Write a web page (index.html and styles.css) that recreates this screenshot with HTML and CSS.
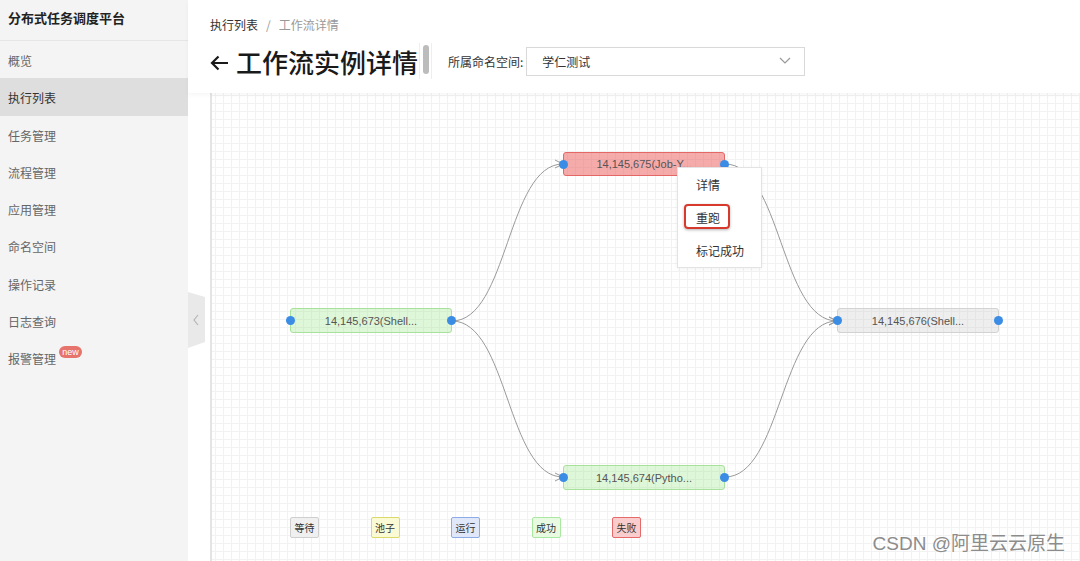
FILE: index.html
```html
<!DOCTYPE html>
<html lang="zh">
<head>
    <meta charset="UTF-8">
    <title>工作流实例详情</title>
    <link rel="stylesheet" href="styles.css">
</head>
<body>

    <!-- Menú lateral -->
    <aside class="sidebar">
        <div class="brand">分布式任务调度平台</div>
        <nav class="nav">
            <a class="nav-item">概览</a>
            <a class="nav-item active">执行列表</a>
            <a class="nav-item">任务管理</a>
            <a class="nav-item">流程管理</a>
            <a class="nav-item">应用管理</a>
            <a class="nav-item">命名空间</a>
            <a class="nav-item">操作记录</a>
            <a class="nav-item">日志查询</a>
            <a class="nav-item">报警管理<span class="badge">new</span></a>
        </nav>
    </aside>

    <!-- Pestaña para plegar el menú -->
    <div class="collapse-tab">
        <svg width="17" height="56" viewBox="0 0 17 56">
            <path d="M0 0 L17 5 L17 50 L0 56 Z" fill="#e9e9e9"/>
            <path d="M10 23 L6 28 L10 33" fill="none" stroke="#b5b5b5" stroke-width="1.2"/>
        </svg>
    </div>

    <main class="main">
        <!-- Cabecera -->
        <header class="page-header">
            <div class="breadcrumb">
                <span class="crumb">执行列表</span>
                <span class="sep">/</span>
                <span class="crumb current">工作流详情</span>
            </div>
            <div class="title-row">
                <h1 class="page-title">
                    <svg class="back" width="19" height="16" viewBox="0 0 19 16">
                        <path d="M18 8 H2 M8.5 1.5 L2 8 L8.5 14.5" fill="none" stroke="#1a1a1a" stroke-width="2.2"/>
                    </svg>
                    工作流实例详情
                </h1>
                <div class="scroll-track"><div class="scroll-thumb"></div></div>
                <label class="ns-label">所属命名空间:</label>
                <div class="select">
                    <span>学仁测试</span>
                    <svg width="12" height="8" viewBox="0 0 12 8">
                        <path d="M1 1 L6 6 L11 1" fill="none" stroke="#999" stroke-width="1.2"/>
                    </svg>
                </div>
            </div>
        </header>

        <!-- Lienzo del flujo -->
        <section class="canvas">
            <svg class="edges" width="870" height="470">
                <defs>
                    <marker id="arrow" markerWidth="10" markerHeight="10" refX="9" refY="5" orient="auto" markerUnits="userSpaceOnUse">
                        <path d="M1 1 L9 5 L1 9" fill="none" stroke="#999" stroke-width="1"/>
                    </marker>
                </defs>
                <path d="M240 228 C296 228 295 71 351 71" marker-end="url(#arrow)"/>
                <path d="M240 228 C296 228 295 384 351 384" marker-end="url(#arrow)"/>
                <path d="M513 71 C569 71 569 228 625 228" marker-end="url(#arrow)"/>
                <path d="M513 384 C569 384 569 228 625 228" marker-end="url(#arrow)"/>
            </svg>

            <div class="node success" style="left: 78px; top: 215px;">
                <span class="port in"></span>14,145,673(Shell...<span class="port out"></span>
            </div>
            <div class="node failed" style="left: 351px; top: 59px;">
                <span class="port in"></span>14,145,675(Job-Y...<span class="port out"></span>
            </div>
            <div class="node success" style="left: 351px; top: 372px;">
                <span class="port in"></span>14,145,674(Pytho...<span class="port out"></span>
            </div>
            <div class="node waiting" style="left: 625px; top: 215px;">
                <span class="port in"></span>14,145,676(Shell...<span class="port out"></span>
            </div>

            <!-- Menú contextual -->
            <div class="context-menu">
                <div class="menu-item">详情</div>
                <div class="menu-item">重跑</div>
                <div class="menu-item">标记成功</div>
                <div class="highlight"></div>
            </div>

            <!-- Leyenda -->
            <div class="legend">
                <span class="legend-item waiting">等待</span>
                <span class="legend-item pool">池子</span>
                <span class="legend-item running">运行</span>
                <span class="legend-item success">成功</span>
                <span class="legend-item failed">失败</span>
            </div>
        </section>
    </main>

    <div class="watermark">CSDN @阿里云云原生</div>

</body>
</html>
```

FILE: styles.css
```css
/* Estilos generales */
body {
    margin: 0;
    padding: 0;
    height: 561px;
    overflow: hidden;
    display: flex;
    font-family: "Noto Sans CJK SC", "Noto Sans", sans-serif;
    background-color: #fff;
    color: #333;
}

/* Menú lateral */
.sidebar {
    width: 188px;
    flex-shrink: 0;
    background-color: #f4f4f4;
}

.brand {
    height: 36px;
    line-height: 36px;
    padding: 0 0 4px 8px;
    font-size: 13px;
    font-weight: bold;
    color: #222;
    border-bottom: 1px solid #e6e6e6;
}

.nav {
    display: flex;
    flex-direction: column;
}

.nav-item {
    height: 37.3px;
    line-height: 39px;
    padding-left: 8px;
    font-size: 12px;
    color: #666;
}

.nav-item.active {
    background-color: #dedede;
    color: #333;
}

.badge {
    display: inline-block;
    position: relative;
    top: -9px;
    margin-left: 3px;
    width: 23px;
    height: 12px;
    line-height: 12px;
    border-radius: 6px;
    background-color: #e6736c;
    color: #fff;
    font-family: "Liberation Sans", sans-serif;
    font-size: 9px;
    text-align: center;
}

/* Pestaña de plegado */
.collapse-tab {
    position: absolute;
    left: 188px;
    top: 292px;
    width: 17px;
    height: 56px;
    z-index: 3;
}

.collapse-tab svg {
    display: block;
}

/* Zona principal */
.main {
    flex: 1;
    display: flex;
    flex-direction: column;
    min-width: 0;
}

.page-header {
    padding: 17px 0 14px 22px;
    position: relative;
    z-index: 2;
    background-color: #fff;
    box-shadow: 0 2px 5px rgba(0, 0, 0, 0.04);
}

.breadcrumb {
    display: flex;
    gap: 8px;
    font-size: 12px;
    line-height: 16px;
    color: #333;
}

.breadcrumb .sep,
.breadcrumb .current {
    color: #999;
}

.title-row {
    display: flex;
    align-items: center;
    height: 36px;
    margin-top: 10px;
}

.page-title {
    margin: 0;
    display: flex;
    align-items: center;
    gap: 7px;
    font-size: 26px;
    font-weight: 500;
    color: #1a1a1a;
    white-space: nowrap;
}

.back {
    margin-top: 3px;
}

.scroll-track {
    width: 13px;
    height: 36px;
    margin-left: 1px;
    border-left: 1px solid #eee;
    border-right: 1px solid #eee;
    display: flex;
    justify-content: center;
    padding-top: 2px;
    box-sizing: border-box;
}

.scroll-thumb {
    width: 6px;
    height: 29px;
    border-radius: 3px;
    background-color: #bcbcbc;
}

.ns-label {
    margin-left: 16px;
    font-size: 12px;
    color: #333;
}

.select {
    margin-left: 3px;
    width: 279px;
    height: 29px;
    box-sizing: border-box;
    border: 1px solid #d9d9d9;
    display: flex;
    align-items: center;
    justify-content: space-between;
    padding: 0 13px 0 15px;
    font-size: 12px;
    color: #333;
}

/* Lienzo */
.canvas {
    flex: 1;
    position: relative;
    overflow: hidden;
    margin-left: 22px;
    border-left: 2px solid #e4e4e4;
    background-color: #fff;
    background-image:
        linear-gradient(#f2f2f2 1px, transparent 1px),
        linear-gradient(90deg, #f2f2f2 1px, transparent 1px);
    background-size: 8px 8px;
    background-position: 3px 2px;
}

.edges {
    position: absolute;
    left: 0;
    top: 0;
}

.edges path {
    fill: none;
    stroke: #9a9a9a;
    stroke-width: 1;
}

/* Nodos */
.node {
    position: absolute;
    width: 162px;
    height: 25px;
    box-sizing: border-box;
    border: 1px solid;
    border-radius: 3px;
    display: flex;
    align-items: center;
    justify-content: center;
    font-family: "Liberation Sans", Arial, sans-serif;
    font-size: 11px;
    color: #555;
}

.node.success {
    background-color: rgba(150, 228, 128, 0.3);
    border-color: #a8e19b;
}

.node.failed {
    height: 24px;
    background-color: rgba(238, 88, 88, 0.5);
    border-color: #e36767;
}

.node.waiting {
    background-color: rgba(200, 200, 200, 0.3);
    border-color: #d2d2d2;
}

.port {
    position: absolute;
    top: 50%;
    width: 9px;
    height: 9px;
    margin-top: -4.5px;
    border-radius: 50%;
    background-color: #3b8ce4;
}

.port.in {
    left: -5px;
}

.port.out {
    right: -5px;
}

/* Menú contextual */
.context-menu {
    position: absolute;
    left: 465px;
    top: 74px;
    width: 83px;
    background-color: #fff;
    border: 1px solid #e3e3e3;
    box-shadow: 0 1px 4px rgba(0, 0, 0, 0.06);
    z-index: 3;
}

.menu-item {
    height: 33px;
    line-height: 33px;
    padding-left: 18px;
    font-size: 12px;
    color: #333;
}

.highlight {
    position: absolute;
    left: 6px;
    top: 36px;
    width: 46px;
    height: 25px;
    box-sizing: border-box;
    border: 2px solid #d8392d;
    border-radius: 4px;
    box-shadow: 0 1px 3px rgba(0, 0, 0, 0.3);
}

/* Leyenda */
.legend {
    position: absolute;
    left: 78px;
    top: 424px;
    display: flex;
    gap: 51.5px;
}

.legend-item {
    width: 29px;
    height: 21px;
    box-sizing: border-box;
    border: 1px solid;
    border-radius: 2px;
    font-size: 10px;
    line-height: 19px;
    text-align: center;
    color: #333;
}

.legend-item.waiting { background-color: #f0f0f0; border-color: #cfcfcf; }
.legend-item.pool    { background-color: #fafad4; border-color: #dada6a; }
.legend-item.running { background-color: #dfe7f9; border-color: #8eabe9; }
.legend-item.success { background-color: #e8fbe2; border-color: #a9e8a0; }
.legend-item.failed  { background-color: #f9cdcd; border-color: #e66a6a; }

/* Marca de agua */
.watermark {
    position: absolute;
    right: 15px;
    bottom: 6px;
    font-size: 19px;
    color: #8c8c8c;
    font-family: "Liberation Sans", "Noto Sans CJK SC", sans-serif;
    text-shadow: 0 0 2px #fff;
}
```
